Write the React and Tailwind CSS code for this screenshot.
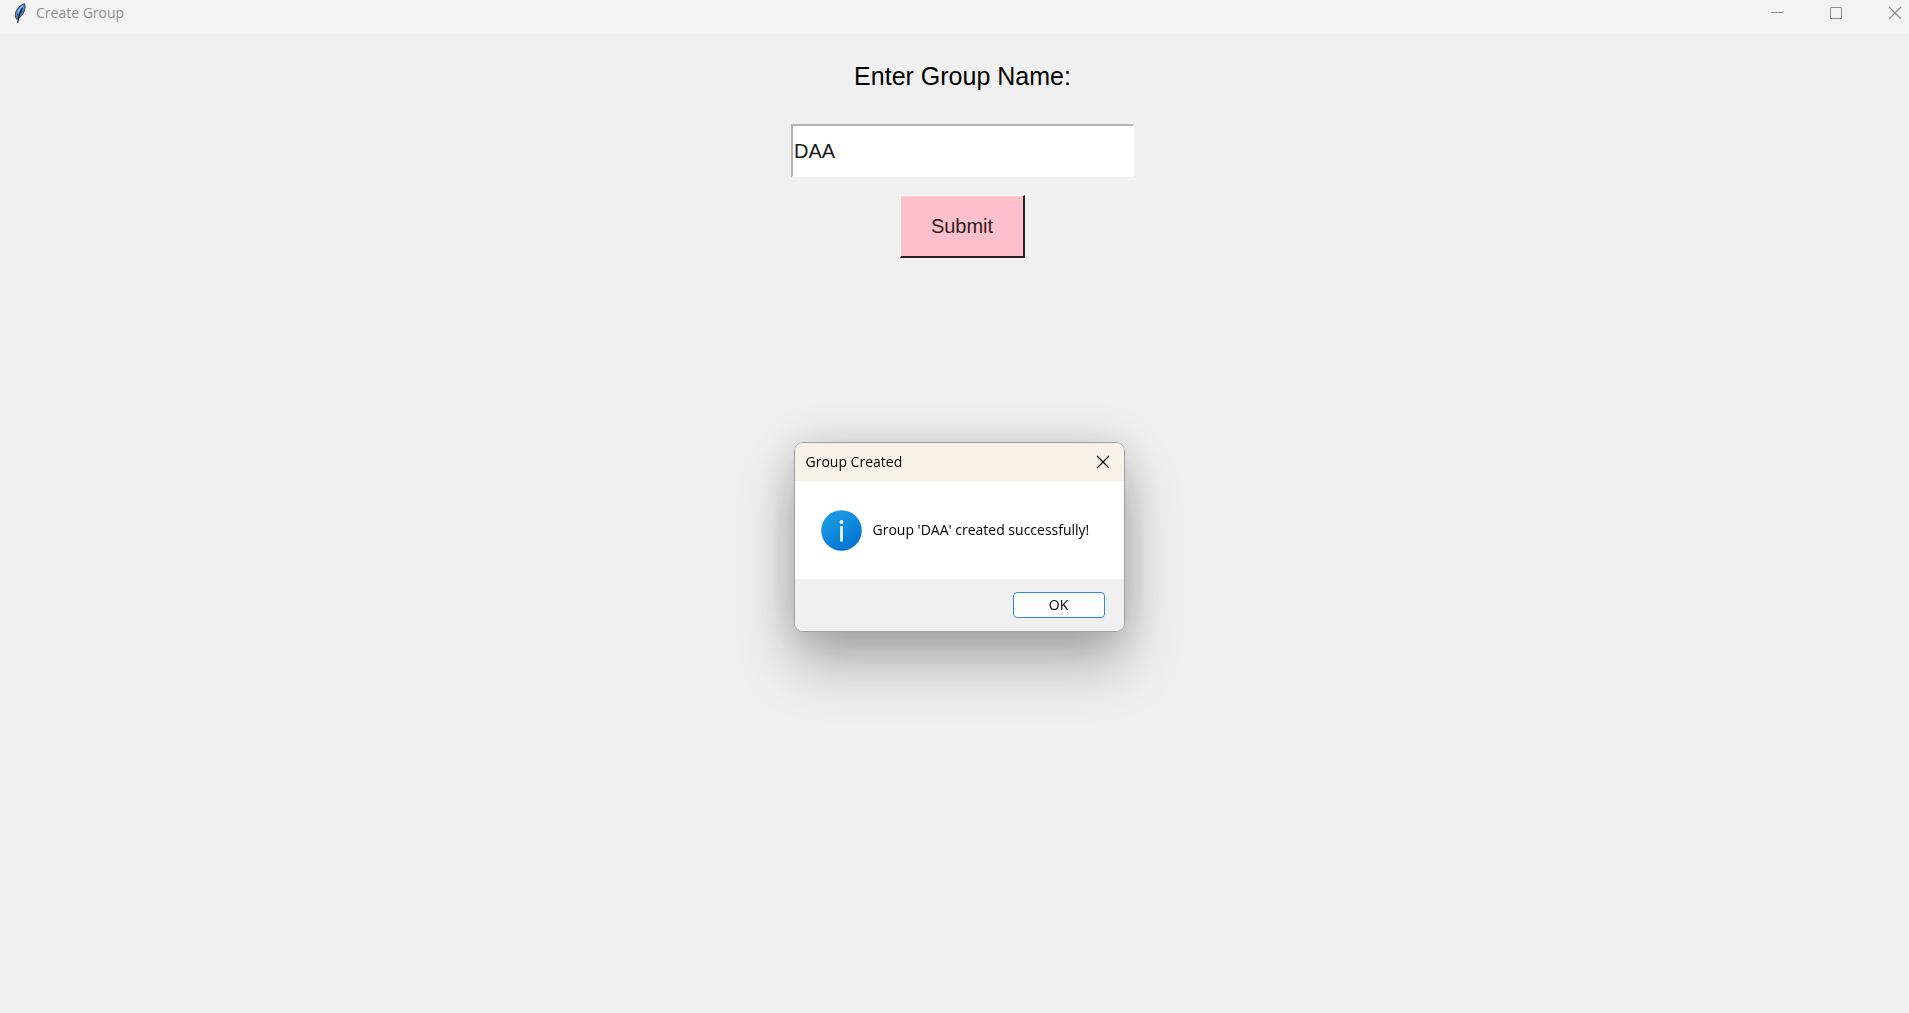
import React, { useState } from "react";

function FeatherIcon() {
  return (
    <svg className="h-[22px] w-3 shrink-0" viewBox="0 0 12 22" aria-hidden="true">
      <path
        d="M10.700 1.800C7.500 2.400 3.400 5.600 1.900 9.800c-.9 2.700-.6 5.400.7 7.400 3-.9 6-3.900 7.600-8 1-2.600 1.100-5.400.5-7.400z"
        fill="#4a86cf"
        stroke="#3a3d42"
        strokeWidth="1"
      />
      <path d="M9 3.800C6.600 5.300 4.600 7.700 3.600 11" stroke="#7fb2ec" strokeWidth="1.400" fill="none" />
      <path d="M8.300 6C6.300 9.500 4.400 13.500 3.700 20.800" stroke="#1b1b1b" strokeWidth="1.200" fill="none" />
      <path d="M8.600 9.500l-2.400 1.200M3 12.500l2 .8" stroke="#1b1b1b" strokeWidth="0.900" />
    </svg>
  );
}

function CrossIcon() {
  return (
    <svg className="size-[14px]" viewBox="0 0 14 14" fill="none" stroke="currentColor" strokeWidth="1.200" aria-hidden="true">
      <path d="M1 1l12 12M13 1L1 13" />
    </svg>
  );
}

function TitleBar() {
  return (
    <header className="flex h-[33px] items-start justify-between bg-[#f3f3f3] pl-[14px] text-[#8e8e8e]">
      <div className="flex h-[26px] items-center gap-[10px]">
        <FeatherIcon />
        <h1 className="text-[14px] leading-5">Create Group</h1>
      </div>
      <div className="flex h-[26px] items-center gap-[45px] pr-[7px]">
        <button type="button" aria-label="Minimize" className="flex w-[14px] justify-center">
          <svg className="h-[14px] w-3" viewBox="0 0 12 14" stroke="currentColor" aria-hidden="true">
            <path d="M0 6.500h12" />
          </svg>
        </button>
        <button type="button" aria-label="Maximize" className="flex w-[14px] justify-center">
          <svg className="size-3" viewBox="0 0 12 12" fill="none" stroke="currentColor" aria-hidden="true">
            <rect x="0.500" y="0.500" width="11" height="11" rx="0.500" />
          </svg>
        </button>
        <button type="button" aria-label="Close">
          <CrossIcon />
        </button>
      </div>
    </header>
  );
}

function MessageDialog({ onClose }) {
  return (
    <div
      role="dialog"
      aria-labelledby="dialog-title"
      className="w-[331px] overflow-hidden rounded-[9px] border border-[#a0a0a0] bg-white text-black shadow-[0_32px_56px_rgba(0,0,0,0.27),0_2px_44px_rgba(0,0,0,0.15)]"
    >
      <div className="flex h-[38px] items-center justify-between bg-[#f9f1e8] pr-[14px] pl-[11px]">
        <h2 id="dialog-title" className="text-[14px] leading-5">Group Created</h2>
        <button type="button" aria-label="Close dialog" onClick={onClose}>
          <CrossIcon />
        </button>
      </div>
      <div className="flex h-[98px] items-center gap-[11px] pl-[26px]">
        <svg className="size-[41px] shrink-0" viewBox="0 0 41 41" aria-hidden="true">
          <defs>
            <linearGradient id="info-fill" x1="0.200" y1="0" x2="0.800" y2="1">
              <stop offset="0" stopColor="#1e9fe6" />
              <stop offset="1" stopColor="#0070d1" />
            </linearGradient>
          </defs>
          <circle cx="20.500" cy="20.500" r="20.300" fill="url(#info-fill)" />
          <circle cx="20.500" cy="12" r="1.900" fill="#fff" />
          <rect x="19.200" y="16" width="2.600" height="15.500" fill="#fff" />
        </svg>
        <p className="text-[14px] leading-5 whitespace-nowrap">Group 'DAA' created successfully!</p>
      </div>
      <div className="flex h-[52px] items-center justify-end bg-[#f0f0f0] pr-[19px]">
        <button
          type="button"
          onClick={onClose}
          className="h-[26px] w-[92px] rounded-[4px] border border-[#2f8bd8] bg-[#fdfdfd] text-[14px] leading-5"
        >
          OK
        </button>
      </div>
    </div>
  );
}

export default function App() {
  const [name, setName] = useState("DAA");
  const [open, setOpen] = useState(true);

  return (
    <div className="flex min-h-screen flex-col bg-[#f0f0f0] font-['Open_Sans','Noto_Sans',sans-serif]">
      <TitleBar />
      <form
        className="flex flex-col items-center pt-7 pl-4 font-['Liberation_Sans',Arial,sans-serif]"
        onSubmit={(e) => {
          e.preventDefault();
          setOpen(true);
        }}
      >
        <label htmlFor="group-name" className="text-[25px] leading-[30px] text-black">
          Enter Group Name:
        </label>
        <input
          id="group-name"
          type="text"
          value={name}
          onChange={(e) => setName(e.target.value)}
          className="mt-[33px] h-[53px] w-[343px] border-t-2 border-r border-b border-l-2 border-t-[#b4b4b4] border-r-white border-b-white border-l-[#b4b4b4] bg-white pl-px text-[20px] text-[#1a1a1a] outline-none"
        />
        <button
          type="submit"
          className="mt-[18px] h-[63px] w-[125px] border-t border-r-2 border-b-2 border-l border-t-white border-r-[#2a2023] border-b-[#2a2023] border-l-white bg-[#ffc0cb] text-[20px] text-[#2b1f22]"
        >
          Submit
        </button>
      </form>
      {open && (
        <div className="pointer-events-none fixed inset-0 flex items-center justify-center pt-[61px] pl-[9px]">
          <div className="pointer-events-auto">
            <MessageDialog onClose={() => setOpen(false)} />
          </div>
        </div>
      )}
    </div>
  );
}
